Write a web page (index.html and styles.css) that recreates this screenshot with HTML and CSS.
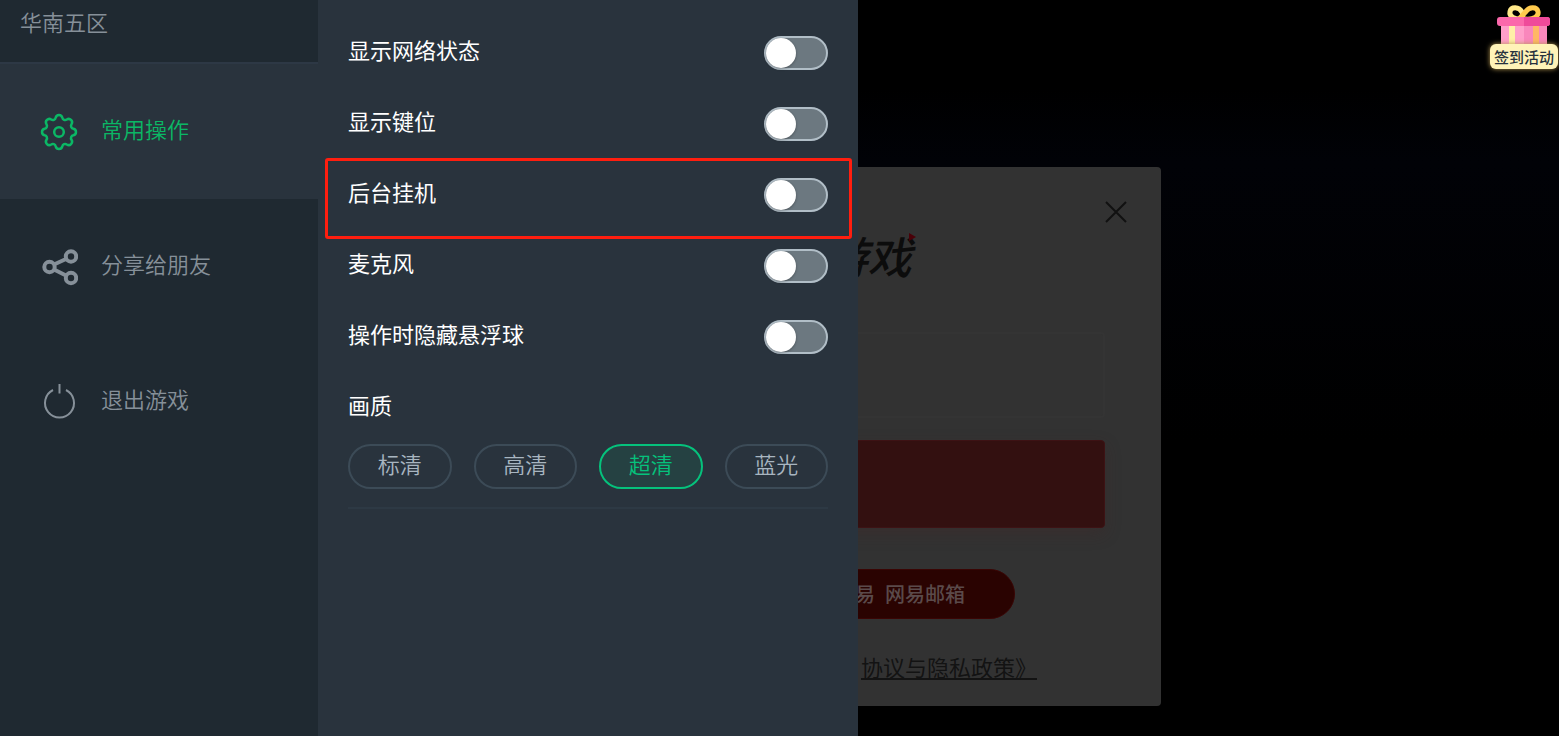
FILE: index.html
```
<!DOCTYPE html>
<html lang="zh-CN">
  <head>
    <meta charset="utf-8">
    <meta name="viewport" content="width=device-width, initial-scale=1">
    <title>常用操作</title>
    <link rel="stylesheet" href="styles.css">
  </head>

  <body>

    <!-- game screen, dimmed while the drawer is open -->
    <main class="game">
      <section class="login">
        <button type="button" class="login-close" aria-label="关闭">
          <svg width="24" height="24" viewBox="0 0 24 24"><path d="M2 2L22 22M22 2L2 22"/></svg>
        </button>
        <div class="login-logo">
          游戏
          <svg class="login-logo-mark" width="8" height="8" viewBox="0 0 8 8"><path d="M1 0L8 4L1 8Z"/></svg>
        </div>
        <input class="login-input" type="text" aria-label="账号">
        <button type="button" class="login-submit" aria-label="登录"></button>
        <button type="button" class="login-mail"><span class="login-mail-mark">易</span>网易邮箱</button>
        <a class="login-terms" href="#">协议与隐私政策》</a>
      </section>
    </main>

    <a class="gift" href="#">
      <svg class="gift-box" width="54" height="46" viewBox="0 0 54 46">
        <rect x="4" y="19" width="23" height="27" fill="#ff9fca"/>
        <rect x="27" y="19" width="23" height="27" fill="#f987bc"/>
        <rect x="12" y="19" width="6" height="27" fill="#fff0a8"/>
        <rect x="36" y="19" width="6" height="27" fill="#ffb765"/>
        <g fill="none" stroke-width="5">
          <path d="M26 14C17 15 12 11 13 6.500C14 1.500 22 1.500 25 7C26 9 26 11 26 14Z" stroke="#ffe88a"/>
          <path d="M28 14C37 15 42 11 41 6.500C40 1.500 32 1.500 29 6.500L22 14" stroke="#ffca4d"/>
        </g>
        <rect x="0" y="12" width="53" height="9" rx="3" fill="#fb68ab"/>
        <path d="M27 12H50Q53 12 53 15V18Q53 21 50 21H27Z" fill="#ef4a9a"/>
      </svg>
      <span class="gift-label">签到活动</span>
    </a>

    <div class="drawer">
      <aside class="sidebar">
        <div class="region">华南五区</div>
        <nav class="menu">
          <a class="menu-item active" href="#">
            <svg class="menu-icon gear" viewBox="0 0 38 38">
              <path d="M15.700 4.600A3.400 3.400 0 0 1 22.300 4.600A2.900 2.900 0 0 0 26.800 6.500A3.400 3.400 0 0 1 31.500 11.200A2.900 2.900 0 0 0 33.400 15.700A3.400 3.400 0 0 1 33.400 22.300A2.900 2.900 0 0 0 31.500 26.800A3.400 3.400 0 0 1 26.800 31.500A2.900 2.900 0 0 0 22.300 33.400A3.400 3.400 0 0 1 15.700 33.400A2.900 2.900 0 0 0 11.200 31.500A3.400 3.400 0 0 1 6.500 26.800A2.900 2.900 0 0 0 4.600 22.300A3.400 3.400 0 0 1 4.600 15.700A2.900 2.900 0 0 0 6.500 11.200A3.400 3.400 0 0 1 11.200 6.500A2.900 2.900 0 0 0 15.700 4.600Z"/>
              <circle cx="19" cy="19" r="4.800"/>
            </svg>
            <span>常用操作</span>
          </a>
          <a class="menu-item" href="#">
            <svg class="menu-icon share" viewBox="0 0 38 38">
              <circle cx="9.500" cy="19" r="5.200"/>
              <circle cx="31" cy="8.500" r="5.200"/>
              <circle cx="31" cy="30" r="5.200"/>
              <path d="M14 16.500L26 11M14 21.500L26 27.500"/>
            </svg>
            <span>分享给朋友</span>
          </a>
          <a class="menu-item" href="#">
            <svg class="menu-icon" viewBox="0 0 38 38">
              <path d="M13 7A14.500 14.500 0 1 0 26 7"/>
              <path d="M19.500 1V10.500"/>
            </svg>
            <span>退出游戏</span>
          </a>
        </nav>
      </aside>

      <section class="settings">
        <label class="row"><span>显示网络状态</span><input class="switch" type="checkbox"></label>
        <label class="row"><span>显示键位</span><input class="switch" type="checkbox"></label>
        <label class="row marked"><span>后台挂机</span><input class="switch" type="checkbox"></label>
        <label class="row"><span>麦克风</span><input class="switch" type="checkbox"></label>
        <label class="row"><span>操作时隐藏悬浮球</span><input class="switch" type="checkbox"></label>
        <div class="row" id="quality"><span>画质</span></div>
        <div class="quality" role="group" aria-labelledby="quality">
          <button type="button">标清</button>
          <button type="button">高清</button>
          <button type="button" class="selected">超清</button>
          <button type="button">蓝光</button>
        </div>
      </section>
    </div>

  </body>
</html>
```
FILE: styles.css
```
* {
  box-sizing: border-box;
}
body {
  margin: 0;
  background: #000;
  font-family: "Noto Sans CJK SC", sans-serif;
  font-size: 22px;
  line-height: 32px;
}
button, input {
  font: inherit;
  margin: 0;
  padding: 0;
}
button {
  cursor: pointer;
}
a {
  color: inherit;
  text-decoration: none;
}

/* game */
.game {
  min-height: 100vh;
  display: flex;
  justify-content: center;
  align-items: flex-end;
  padding: 30px 0;
  background: linear-gradient(#000 12%, #010207 22%, #000 60%);
}
.login {
  position: relative;
  width: 763px;
  padding: 58px 56px 24px;
  display: flex;
  flex-direction: column;
  align-items: center;
  background: #323232;
  border-radius: 4px;
}
.login-close {
  position: absolute;
  top: 33px; right: 33px;
  width: 24px; height: 24px;
  border: 0;
  background: none;
}
.login-close svg {
  display: block;
  fill: none;
  stroke: #111;
  stroke-width: 2;
}
.login-logo {
  position: relative;
  width: 264px;
  height: 60px;
  line-height: 60px;
  text-align: right;
  font-size: 44px;
  font-weight: 500;
  font-style: italic;
  color: #0c0c0c;
}
.login-logo-mark {
  position: absolute;
  top: 8px; right: -4px;
  fill: #4a0008;
}
.login-input {
  width: 100%;
  height: 86px;
  margin-top: 47px;
  padding: 0 24px;
  border: 2px solid #343434;
  border-radius: 4px;
  background: #323232;
}
.login-submit {
  width: 100%;
  height: 88px;
  margin-top: 22px;
  border: 1px solid #3d1214;
  border-radius: 4px;
  background: #331010;
  box-shadow: 0 6px 16px rgba(70, 35, 38, 0.3);
}
.login-mail {
  width: 471px;
  height: 50px;
  margin-top: 41px;
  padding-right: 49px;
  display: flex;
  justify-content: flex-end;
  align-items: center;
  gap: 10px;
  border: 1px solid #3a0504;
  border-radius: 25px;
  background: #2a0301;
  font-size: 20px;
  font-weight: 500;
  color: #5a4a4a;
}
.login-terms {
  width: 515px;
  margin-top: 31px;
  text-align: right;
  text-decoration: underline;
  color: #131313;
}

.gift {
  position: absolute;
  top: 5px; right: 1px;
  display: flex;
  flex-direction: column;
  align-items: center;
}
.gift-label {
  margin-top: -7px;
  padding: 1px 4px 0;
  border-radius: 6px;
  background: #fff3b8;
  box-shadow: 0 0 5px #b89a55;
  font-size: 15px;
  font-weight: 500;
  line-height: 24px;
  color: #26313d;
}

/* drawer */
.drawer {
  position: absolute;
  top: 0; left: 0;
  min-height: 100%;
  display: flex;
}
.sidebar {
  width: 318px;
  background: #1f2931;
  color: #869099;
  font-weight: 350;
}
.region {
  height: 64px;
  padding: 5px 20px;
  border-bottom: 2px solid #2d3845;
}
.menu-item {
  height: 135px;
  padding-left: 40px;
  display: flex;
  align-items: center;
  gap: 23px;
}
.menu-item.active {
  background: #29333d;
  color: #0bb765;
}
.menu-item span {
  padding-bottom: 8px;
}
.menu-icon {
  width: 38px;
  height: 38px;
  fill: none;
  stroke: currentColor;
  stroke-width: 2;
}
.menu-icon.gear {
  stroke-width: 2.5;
}
.menu-icon.share {
  stroke-width: 4;
}

.settings {
  width: 540px;
  padding: 17px 30px;
  background: #29333d;
  color: #fff;
}
.row {
  height: 71px;
  display: flex;
  justify-content: space-between;
  align-items: center;
}
.row span {
  padding-bottom: 8px;
}
.marked {
  position: relative;
}
.marked::after {
  content: '';
  position: absolute;
  top: -1px; right: -24px; bottom: -9px; left: -23px;
  border: 3px solid #ff1e0f;
  border-radius: 3px;
  pointer-events: none;
}
.switch {
  appearance: none;
  width: 64px;
  height: 34px;
  border: 2px solid #b1bec7;
  border-radius: 17px;
  background: #6c7880;
  cursor: pointer;
}
.switch::before {
  content: '';
  display: block;
  width: 30px;
  height: 30px;
  border-radius: 50%;
  background: #fff;
  box-shadow: 0 1px 3px rgba(0, 0, 0, 0.3);
}
.switch:checked {
  background: #05c27c;
}
.switch:checked::before {
  margin-left: auto;
}
.quality {
  display: flex;
  gap: 22px;
  margin-top: 1px;
  padding-bottom: 18px;
  border-bottom: 2px solid #2d3944;
}
.quality button {
  flex: 1;
  height: 45px;
  padding-bottom: 8px;
  border: 2px solid #3c4b57;
  border-radius: 23px;
  background: none;
  font-weight: 350;
  color: #a8b5c0;
}
.quality .selected {
  border-color: #05c27c;
  background: #254142;
  color: #05c27c;
}
```
